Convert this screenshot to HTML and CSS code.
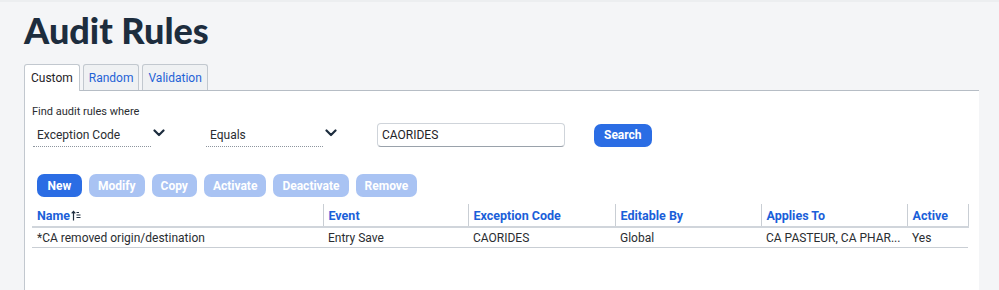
FILE: index.html
```html
<!DOCTYPE html>
<html lang="en">
<head>
    <meta charset="UTF-8">
    <title>Audit Rules</title>
    <link rel="stylesheet" href="styles.css">
</head>
<body>
    <div class="page">
        <h1 class="title">Audit Rules</h1>

        <div class="tabs">
            <div class="tab active">Custom</div>
            <div class="tab">Random</div>
            <div class="tab">Validation</div>
        </div>

        <div class="panel">
            <div class="find-label">Find audit rules where</div>
            <div class="filters">
                <div class="select">
                    <div class="select-value field">Exception Code</div>
                    <svg class="chevron" width="12" height="8" viewBox="0 0 12 8"><path d="M1.5 1.5 L6 6 L10.5 1.5" fill="none" stroke="#1d2d3e" stroke-width="2.2" stroke-linecap="round" stroke-linejoin="round"/></svg>
                </div>
                <div class="select">
                    <div class="select-value operator">Equals</div>
                    <svg class="chevron" width="12" height="8" viewBox="0 0 12 8"><path d="M1.5 1.5 L6 6 L10.5 1.5" fill="none" stroke="#1d2d3e" stroke-width="2.2" stroke-linecap="round" stroke-linejoin="round"/></svg>
                </div>
                <input class="search-input" type="text" value="CAORIDES">
                <button class="btn search">Search</button>
            </div>

            <div class="actions">
                <button class="btn">New</button>
                <button class="btn disabled">Modify</button>
                <button class="btn disabled">Copy</button>
                <button class="btn disabled">Activate</button>
                <button class="btn disabled">Deactivate</button>
                <button class="btn disabled">Remove</button>
            </div>

            <table class="rules">
                <colgroup>
                    <col style="width: 291px">
                    <col style="width: 145px">
                    <col style="width: 147px">
                    <col style="width: 146px">
                    <col style="width: 146px">
                    <col style="width: 61px">
                </colgroup>
                <thead>
                    <tr>
                        <th>Name<svg class="sort" width="10" height="11" viewBox="0 0 10 11"><path d="M2.5 10.5 V1.5 M0.7 3.4 L2.5 1.3 L4.3 3.4" fill="none" stroke="#1d2d3e" stroke-width="1.2"/><path d="M5.5 2.5 H8 M5.5 5 H9.5 M5.5 7.5 H9.5" stroke="#1d2d3e" stroke-width="1.1"/></svg></th>
                        <th>Event</th>
                        <th>Exception Code</th>
                        <th>Editable By</th>
                        <th>Applies To</th>
                        <th>Active</th>
                    </tr>
                </thead>
                <tbody>
                    <tr>
                        <td>*CA removed origin/destination</td>
                        <td>Entry Save</td>
                        <td>CAORIDES</td>
                        <td>Global</td>
                        <td>CA PASTEUR, CA PHAR...</td>
                        <td>Yes</td>
                    </tr>
                </tbody>
            </table>
        </div>
    </div>
</body>
</html>
```

FILE: styles.css
```css
body {
    margin: 0;
    background-color: #f4f5f7;
    border-top: 2px solid #eceef0;
    font-family: Roboto, "Noto Sans", sans-serif;
    color: #2a2d31;
}

.page {
    padding: 0 20px 0 24px;
}

.title {
    margin: 0;
    padding: 7px 0 13px;
    font-family: Lato, sans-serif;
    font-weight: 900;
    font-size: 36px;
    line-height: 42px;
    color: #1d2d3e;
}

.tabs {
    display: flex;
    gap: 3px;
    height: 26px;
    position: relative;
    z-index: 1;
}

.tab {
    height: 26px;
    padding: 0 5px;
    box-sizing: border-box;
    display: flex;
    align-items: center;
    font-size: 12px;
    color: #1f62d6;
    background-color: #eff1f3;
    border: 1px solid #c2c8cf;
    border-bottom: none;
    border-radius: 3px 3px 0 0;
}

.tab.active {
    height: 27px;
    padding: 0 6px;
    color: #1f2327;
    background-color: #fff;
}

.panel {
    background-color: #fff;
    border-top: 1px solid #b6bdc5;
    border-left: 1px solid #c2c8cf;
    padding: 13px 10px 40px 7px;
    min-height: 160px;
}

.find-label {
    font-size: 11px;
    line-height: 15px;
}

.filters {
    display: flex;
    align-items: center;
    margin-top: 4px;
    margin-left: 1px;
    height: 24px;
}

.select {
    display: flex;
    align-items: center;
    margin-right: 41px;
}

.select-value {
    font-size: 12px;
    line-height: 22px;
    padding: 0 4px;
    border-bottom: 1px dotted #8d959e;
    box-sizing: border-box;
}

.select-value.field {
    width: 118px;
}

.select-value.operator {
    width: 117px;
}

.chevron {
    margin-left: 2px;
    margin-top: -4px;
}

.search-input {
    width: 188px;
    height: 24px;
    box-sizing: border-box;
    padding: 0 4px;
    font-family: inherit;
    font-size: 12px;
    color: #1f2327;
    border: 1px solid #cfd4da;
    border-bottom-color: #9aa2ab;
    border-radius: 4px;
    margin-left: -1px;
    margin-right: 29px;
}

.btn {
    height: 23px;
    min-width: 45px;
    padding: 0 9px;
    font-family: inherit;
    font-size: 12px;
    font-weight: 700;
    color: #fff;
    background-color: #2b6de4;
    border: none;
    border-radius: 7px;
}

.btn.search {
    padding: 0 10px;
}

.btn.disabled {
    background-color: #a9c3f3;
}

.actions {
    display: flex;
    gap: 7px;
    margin-top: 27px;
    padding-left: 5px;
}

.rules {
    margin-top: 7px;
    border-collapse: collapse;
    table-layout: fixed;
    width: 936px;
    font-size: 12px;
}

.rules th {
    text-align: left;
    font-size: 12.5px;
    font-weight: 700;
    color: #1b5fd9;
    height: 22px;
    padding: 0 5px;
    border-right: 1px solid #c9ced4;
    border-bottom: 2px solid #d0d5db;
}

.rules td {
    height: 19px;
    padding: 0 5px;
    border-bottom: 1px solid #c9ced4;
    white-space: nowrap;
}

.sort {
    margin-left: 1px;
    vertical-align: -1px;
}
```
